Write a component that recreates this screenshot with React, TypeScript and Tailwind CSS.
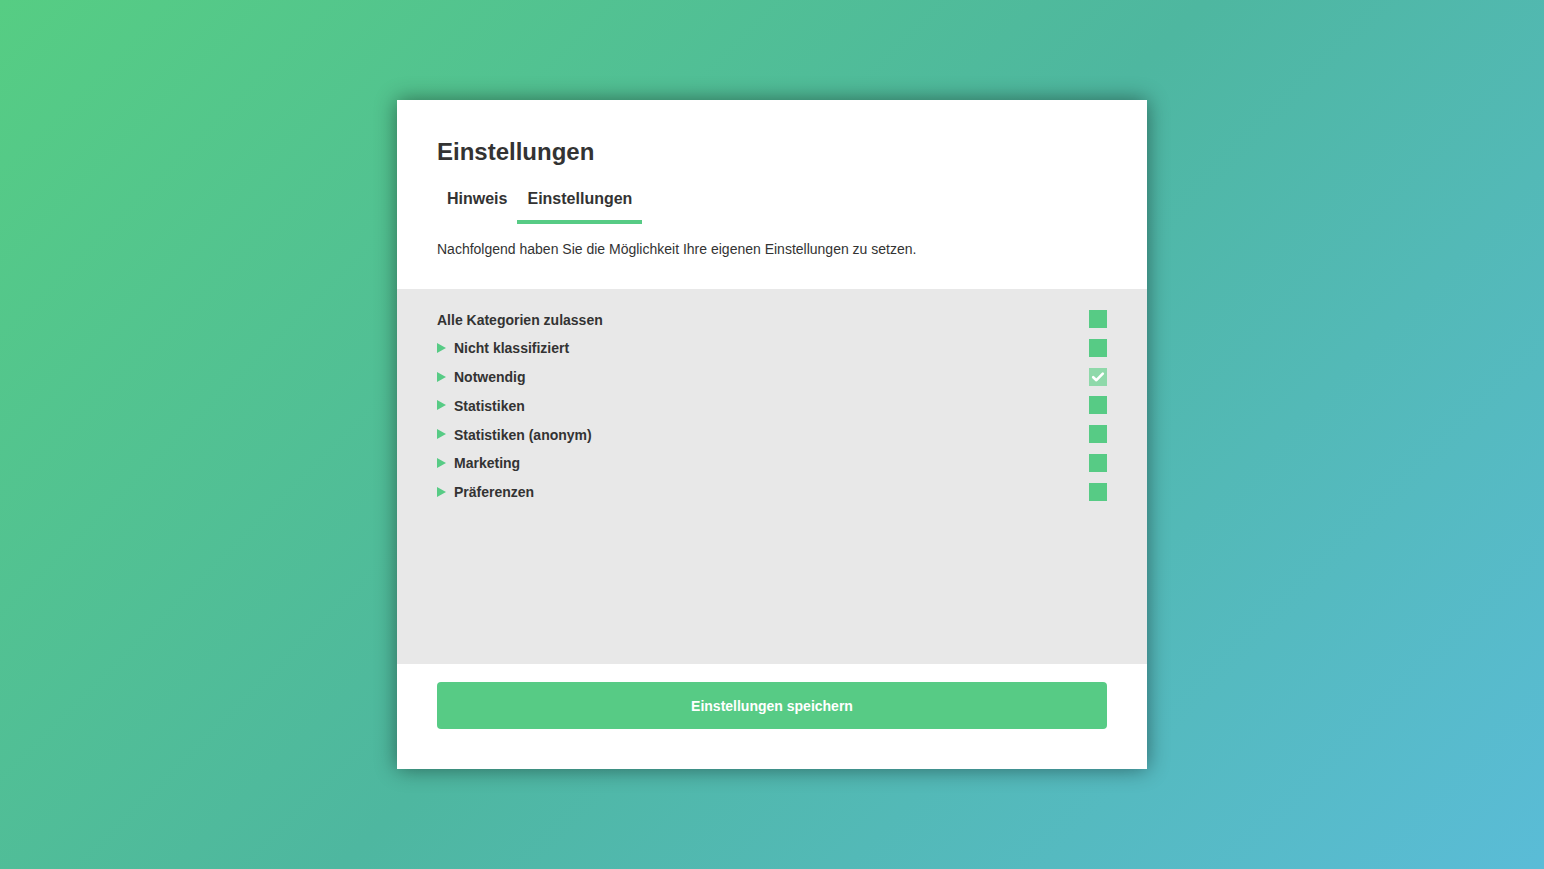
import React from "react";

const rows = [
  "Nicht klassifiziert",
  "Notwendig",
  "Statistiken",
  "Statistiken (anonym)",
  "Marketing",
  "Präferenzen",
];

function Box({ checked }: { checked?: boolean }) {
  return (
    <div
      className={
        "w-[18px] h-[18px] flex items-center justify-center " +
        (checked ? "bg-[#8fd9aa]" : "bg-[#57cb85]")
      }
    >
      {checked && (
        <svg width="14" height="14" viewBox="0 0 14 14">
          <path d="M2.2 7.2 L5.4 10.2 L11.8 3.6" stroke="#fff" strokeWidth="2.6" fill="none" strokeLinecap="round" strokeLinejoin="round" />
        </svg>
      )}
    </div>
  );
}

export default function App() {
  return (
    <div
      className="w-full h-[869px] bg-[linear-gradient(135deg,#56cd83_0%,#4eb7a0_50%,#5abcd7_100%)] flex justify-center pt-[100px] text-[#333]"
      style={{ fontFamily: '"Liberation Sans", Arial, sans-serif' }}
    >
      <div className="w-[750px] h-[669px] bg-white flex flex-col shadow-[0_0_20px_rgba(0,0,0,0.45)]">
        <div className="px-[40px] pt-[38px] pb-[30px]">
          <h1 className="text-[24px] leading-[28px] font-bold">Einstellungen</h1>
          <div className="flex mt-[10px]">
            <div className="px-[10px] pt-[11px] pb-[13px] text-[16px] leading-[24px] font-bold">Hinweis</div>
            <div className="px-[10px] pt-[11px] pb-[9px] text-[16px] leading-[24px] font-bold border-b-[4px] border-[#57cb85]">
              Einstellungen
            </div>
          </div>
          <p className="mt-[15px] text-[14px] leading-[20px]">
            Nachfolgend haben Sie die Möglichkeit Ihre eigenen Einstellungen zu setzen.
          </p>
        </div>
        <div className="flex-1 bg-[#e8e8e8] px-[40px] pt-[21px] flex flex-col gap-[10.8px]">
          <div className="flex items-center justify-between h-[18px]">
            <span className="text-[14px] font-bold mt-[2px]">Alle Kategorien zulassen</span>
            <Box />
          </div>
          {rows.map((r) => (
            <div key={r} className="flex items-center justify-between h-[18px]">
              <div className="flex items-center">
                <svg width="9" height="10" viewBox="0 0 9 10" className="mr-[8px]">
                  <path d="M0 0 L9 5 L0 10 Z" fill="#57cb85" />
                </svg>
                <span className="text-[14px] font-bold mt-[2px]">{r}</span>
              </div>
              <Box checked={r === "Notwendig"} />
            </div>
          ))}
        </div>
        <div className="px-[40px] pt-[18px] pb-[40px]">
          <button className="w-full h-[47px] pt-[2px] rounded-[4px] bg-[#57cb85] text-white text-[14px] font-bold">
            Einstellungen speichern
          </button>
        </div>
      </div>
    </div>
  );
}
